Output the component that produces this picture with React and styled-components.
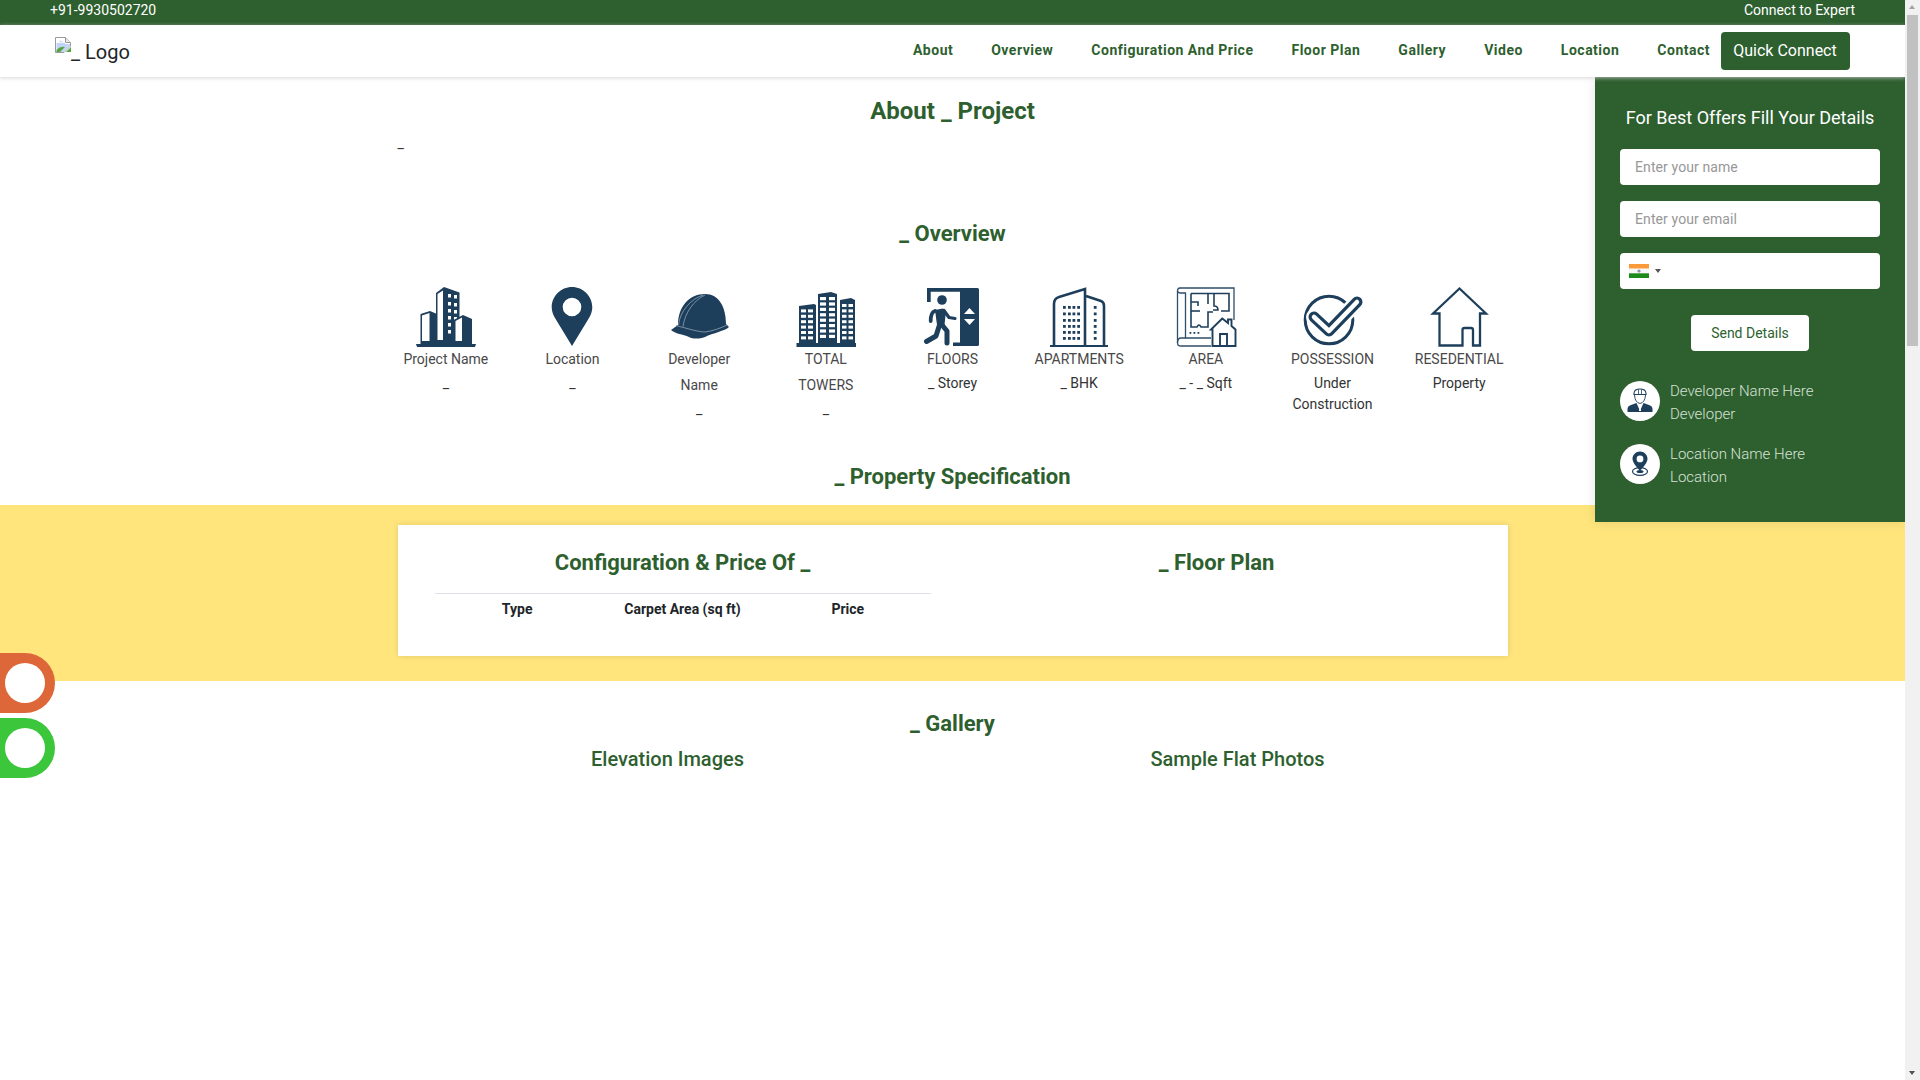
import React from 'react'
import styled, { createGlobalStyle } from 'styled-components'

const GREEN = '#2e5f2f'
const NAVY = '#1e3f5c'

const GlobalStyle = createGlobalStyle`
  html, body {
    margin: 0;
    padding: 0;
    height: 100%;
    overflow: hidden;
    background: #fff;
  }
  body {
    font-family: Roboto, "Liberation Sans", sans-serif;
    font-size: 14px;
    line-height: 21px;
    color: #333;
  }
  * { box-sizing: border-box; }
`

const Viewport = styled.div`
  display: flex;
  width: 1920px;
  height: 1080px;
  overflow: hidden;
`
const Page = styled.div`
  position: relative;
  width: 1905px;
  height: 1080px;
  overflow: hidden;
  flex: none;
`

/* top bars */
const TopBar = styled.div`
  display: flex;
  justify-content: space-between;
  height: 25px;
  padding: 0 50px;
  background: ${GREEN};
  color: #fff;
`
const NavBar = styled.nav`
  position: relative;
  z-index: 3;
  display: flex;
  align-items: center;
  justify-content: space-between;
  height: 52px;
  padding: 0 55.5px 0 55px;
  background: #fff;
  box-shadow: 0 1px 4px rgba(205, 205, 205, 0.8);
`
const Logo = styled.div`
  display: flex;
  align-items: flex-start;
  height: 28px;
  font-size: 20px;
  line-height: 28px;
  color: #212529;
  svg { display: block; }
  span { margin-top: 1px; }
`
const NavLinks = styled.div`
  display: flex;
  align-items: center;
  gap: 38px;
`
const NavLink = styled.a`
  padding-bottom: 2px;
  font-weight: 700;
  letter-spacing: 0.5px;
  color: ${GREEN};
`
const QuickButton = styled.button`
  width: 129px;
  height: 38px;
  margin-left: -27.5px;
  padding: 0;
  border: 0;
  border-radius: 4px;
  background: ${GREEN};
  color: #fff;
  font: 400 16px/24px Roboto, sans-serif;
`

/* content */
const Main = styled.main`
  display: flex;
  flex-direction: column;
`
const SectionTitle = styled.h2`
  margin: ${p => p.$top || 0}px 0 ${p => p.$bottom || 0}px;
  font-size: ${p => p.$size || 22}px;
  line-height: ${p => p.$line || 26}px;
  font-weight: 700;
  text-align: center;
  color: ${GREEN};
`
const Container = styled.div`
  width: 1110px;
  margin: 0 auto;
`
const AboutText = styled.p`
  margin: 7px 0 0;
  height: 21px;
`
const OverviewGrid = styled.div`
  display: grid;
  grid-template-columns: repeat(9, 1fr);
  width: 1140px;
  margin: 40px auto 0;
`
const OverviewItem = styled.div`
  padding: 0 15px;
  text-align: center;
  svg {
    display: block;
    width: 60px;
    height: 60px;
    margin: 0 0 -1px calc(50% - 30px);
    overflow: visible;
  }
`
const OverviewLabel = styled.div`
  line-height: 26px;
  color: #484848;
`
const OverviewValue = styled.div`
  margin-top: 1px;
  color: #333;
`
const YellowBand = styled.section`
  margin-top: 15px;
  padding: 20px 0 25px;
  background: #ffe57c;
`
const Card = styled.div`
  display: grid;
  grid-template-columns: 534px 534px;
  width: 1110px;
  height: 131px;
  margin: 0 auto;
  padding: 25px 24px 0 18px;
  background: #fff;
  box-shadow: 0 0 6px rgba(0, 0, 0, 0.12);
`
const PriceTable = styled.table`
  width: 496px;
  margin: 17px 19px 0;
  border-collapse: collapse;
  table-layout: fixed;
  th {
    padding: 2px 0;
    border-top: 1px solid #dee2e6;
    font-weight: 700;
    color: #212529;
    line-height: 27px;
  }
`
const GalleryRow = styled.div`
  display: grid;
  grid-template-columns: 1fr 1fr;
  width: 1140px;
  margin: 10px auto 0;
`
const GalleryTitle = styled.h3`
  margin: 0;
  font-size: 20px;
  line-height: 24px;
  font-weight: 500;
  text-align: center;
  color: ${GREEN};
`

/* side form */
const SidePanel = styled.aside`
  position: absolute;
  z-index: 2;
  top: 77px;
  right: 0;
  width: 310px;
  height: 445px;
  padding: 29px 25px 0;
  background: ${GREEN};
  box-shadow: 0 0 12px rgba(0, 0, 0, 0.1);
`
const PanelTitle = styled.div`
  margin: 0 -10px 19px;
  font-size: 18px;
  line-height: 24px;
  text-align: center;
  color: #fff;
`
const Field = styled.input`
  display: block;
  width: 260px;
  height: 36px;
  margin-bottom: 16px;
  padding: 0 15px;
  border: 0;
  border-radius: 4px;
  background: #fff;
  font: 400 14px Roboto, sans-serif;
  letter-spacing: 0.1px;
  &::placeholder { color: #979797; opacity: 1; }
`
const PhoneField = styled.div`
  display: flex;
  align-items: center;
  gap: 6px;
  width: 260px;
  height: 36px;
  padding: 0 9px;
  border-radius: 4px;
  background: #fff;
`
const Caret = styled.span`
  width: 0;
  height: 0;
  border-left: 3px solid transparent;
  border-right: 3px solid transparent;
  border-top: 4px solid #555;
`
const SendButton = styled.button`
  display: block;
  width: 118px;
  height: 36px;
  margin: 26px auto 30px;
  border: 0;
  border-radius: 4px;
  background: #fff;
  color: ${GREEN};
  font: 400 14px Roboto, sans-serif;
`
const InfoRow = styled.div`
  display: flex;
  align-items: flex-start;
  gap: 10px;
  margin-bottom: 18px;
`
const InfoCircle = styled.div`
  flex: none;
  width: 40px;
  height: 40px;
  border-radius: 50%;
  background: #fff;
  svg { display: block; }
`
const InfoText = styled.div`
  margin-top: -1px;
  font-size: 15px;
  line-height: 23px;
  font-weight: 300;
  color: #d7e2d7;
`

/* floating contact buttons */
const FloatStack = styled.div`
  position: absolute;
  z-index: 4;
  left: 0;
  top: 653px;
  display: flex;
  flex-direction: column;
  gap: 5px;
`
const FloatButton = styled.a`
  display: flex;
  align-items: center;
  width: 55px;
  height: 60px;
  padding-left: 5px;
  border-radius: 0 30px 30px 0;
  background: ${p => p.$color};
  &::before {
    content: '';
    width: 40px;
    height: 40px;
    border-radius: 50%;
    background: #fff;
  }
`

/* the browser scrollbar of the reference */
const ScrollTrack = styled.div`
  position: relative;
  flex: none;
  width: 15px;
  height: 1080px;
  background: #f1f1f1;
`
const ScrollThumb = styled.div`
  position: absolute;
  top: 15px;
  left: 2px;
  width: 11px;
  height: 331px;
  background: #c1c1c1;
`
const ScrollArrow = styled.span`
  position: absolute;
  left: 4px;
  ${p => (p.$down ? 'bottom: 5px;' : 'top: 5px;')}
  border-left: 3.5px solid transparent;
  border-right: 3.5px solid transparent;
  ${p => (p.$down ? 'border-top: 4px solid #505050;' : 'border-bottom: 4px solid #a3a3a3;')}
`

const BrokenImage = () => (
  <svg width='16' height='16' viewBox='0 0 16 16'>
    <path d='M0.5 0.5H10.5L15.5 5.5V9L9 15.5H0.5Z' fill='#fff' stroke='#9a9a9a' />
    <path d='M10.5 0.5V5.5H15.5' fill='#e8e8e8' stroke='#9a9a9a' />
    <path d='M1.5 6H10V7H15V9L8.5 15H1.5Z' fill='#c3d4f5' />
    <path d='M4 4.5Q5 2.5 7 3.5Q8.5 4 8.5 5.5H3.5Z' fill='#dfe7f7' />
    <path d='M1.5 15V13Q5 9 10 10L5 15Z' fill='#53a642' />
    <path d='M11 15L16 10V15Z' fill='#53a642' />
  </svg>
)

const BuildingsIcon = () => (
  <svg viewBox='0 0 60 60'>
    <path d='M0 57H60L59 60H1Z' fill={NAVY} />
    <path d='M20 6L28 0L43.5 5.5V57H20Z' fill={NAVY} />
    <path d='M21.5 7L27 3.5V53H21.5Z' fill='#fff' />
    {[7, 15, 22, 29, 36, 43].map(y => (
      <g key={y}>
        <rect x='32' y={y} width='3' height='3.5' fill='#fff' />
        <rect x='38' y={y + 1} width='3' height='3.5' fill='#fff' />
      </g>
    ))}
    <path d='M4.5 27L14 24L21 27V57H4.5Z' fill={NAVY} />
    <path d='M6 28.5L13.5 26V54H6Z' fill='#fff' />
    <path d='M37.5 33L47 28L56 32V57H37.5Z' fill={NAVY} />
    <path d='M39.5 34L46 30.5V54H39.5Z' fill='#fff' />
  </svg>
)

const PinIcon = () => (
  <svg viewBox='0 0 60 60'>
    <path
      fillRule='evenodd'
      fill={NAVY}
      d='M30 0C18.8 0 9.7 9.1 9.7 20.3C9.7 24 11 28 13 31L30 59L47 31C49 28 50.3 24 50.3 20.3C50.3 9.1 41.2 0 30 0ZM30 10.7A9.3 9.3 0 1 1 30 29.3A9.3 9.3 0 1 1 30 10.7Z'
    />
  </svg>
)

const HelmetIcon = () => (
  <svg viewBox='0 0 60 60'>
    <path
      fill={NAVY}
      d='M9 38C9 20 20 7 36 7C50 7 57 20 57 37L60 40C56 44 44 46 36 50C30 52 24 52 20 50C14 47 6 47 2 43Z'
    />
    <g fill='none' stroke='#8fa5b6' strokeWidth='0.8'>
      <path d='M7 38.5C20 42 30 45 36 45C44 44 52 41 58 38' />
      <path d='M9.5 38C11 24 22 12 34 8' />
      <path d='M14 39.5C16 26 24 14 36 8' />
    </g>
  </svg>
)

const TowersIcon = () => {
  const rows = [0, 1, 2, 3, 4, 5, 6]
  return (
    <svg viewBox='0 0 60 60'>
      <path d='M0.5 56H60V60H0.5Z' fill={NAVY} />
      <path d='M3 19L18 17L20 18V57H3Z' fill={NAVY} />
      <path d='M22 7L35 5L41 7V57H22Z' fill={NAVY} />
      <path d='M44 13L55 11L59 13V57H44Z' fill={NAVY} />
      {rows.slice(1).map(r => (
        <g key={r} fill='#fff'>
          <rect x='5' y={17 + r * 5.4} width='5' height='3' />
          <rect x='12' y={17 + r * 5.4} width='5' height='3' />
        </g>
      ))}
      {rows.concat([7]).map(r => (
        <g key={r} fill='#fff'>
          <rect x='24' y={10 + r * 5.4} width='6' height='3.2' />
          <rect x='33' y={10 + r * 5.4} width='6' height='3.2' />
        </g>
      ))}
      {rows.map(r => (
        <g key={r} fill='#fff'>
          <rect x='46' y={17 + r * 5.4} width='4.5' height='3' />
          <rect x='52.5' y={17 + r * 5.4} width='4.5' height='3' />
        </g>
      ))}
    </svg>
  )
}

const ExitIcon = () => (
  <svg viewBox='0 0 60 60'>
    <path d='M5 15V1H38.3V4.7H8.7V15Z' fill={NAVY} />
    <path d='M38 1H55.5Q57 1 57 2.5V57.5Q57 59 55.5 59H31V55.5H38Z' fill={NAVY} />
    <path d='M47.5 21L53 27H42Z M42 32H53L47.5 38Z' fill='#fff' />
    <circle cx='20' cy='13' r='4.8' fill={NAVY} />
    <path d='M13 23L21 21.5L24 24L22.5 38H15Z' fill={NAVY} />
    <g fill='none' stroke={NAVY} strokeLinecap='round' strokeLinejoin='round'>
      <path d='M13 24C9.5 25 8.7 28 8.7 34' strokeWidth='3.8' />
      <path d='M22 23.5L27 30.5L33 31.5' strokeWidth='3.2' />
      <path d='M17.5 38L14 49L4.5 54.5' strokeWidth='5' />
      <path d='M20 38L25 44V56' strokeWidth='5' />
    </g>
  </svg>
)

const ApartmentsIcon = () => {
  const rows = [19, 25.5, 32, 38, 44, 50]
  return (
    <svg viewBox='0 0 60 60'>
      <path d='M1 58H59V60H1Z' fill={NAVY} />
      <g fill='none' stroke={NAVY} strokeWidth='2.6'>
        <path d='M5 59V17Q5 11.5 10 10L36 2V59' />
        <path d='M37 9L52 14Q55 15 55 19V59' />
      </g>
      {rows.map(y => (
        <g key={y} fill={NAVY}>
          {[14, 19, 23.5, 28.2, 44.8].map(x => (
            <rect key={x} x={x} y={y} width='2.8' height='2.8' />
          ))}
        </g>
      ))}
    </svg>
  )
}

const PlanIcon = () => (
  <svg viewBox='0 0 60 60'>
    <g fill='none' stroke={NAVY} strokeWidth='1.3' opacity='0.92'>
      <path d='M58 33V1H4C2 1 1.5 2.5 1.5 4V56C1.5 58 3 59 5 59H35' />
      <path d='M1.5 4C1.5 5.5 3 6 5 6H9.5V51H35' />
      <path d='M1.5 56C1.5 53 3 51 5 51H9.5' />
    </g>
    <g fill='none' stroke={NAVY} strokeWidth='1.6'>
      <path d='M15 6.5H53V24H45' />
      <path d='M15 6.5V40H21Q23 36 25 40H32V25H37' />
      <path d='M15 15H22V19' />
      <path d='M15 24H24' />
      <path d='M32 6.5V17' />
      <path d='M38 6.5V19Q42 19 42 23H37' />
    </g>
    <g fill={NAVY}>
      <rect x='13.5' y='45' width='1.8' height='1.8' />
      <rect x='17.5' y='45' width='1.8' height='1.8' />
      <rect x='21.5' y='45' width='1.8' height='1.8' />
    </g>
    <path
      d='M46.3 31.5L35 42.5H36.5V59H59.5V42.5L55.5 39V32.5H52V36Z'
      fill='#fff'
      stroke={NAVY}
      strokeWidth='1.9'
    />
    <path d='M44 59V47H51V59' fill='none' stroke={NAVY} strokeWidth='1.9' />
  </svg>
)

const CheckIcon = () => (
  <svg viewBox='0 0 60 60'>
    <circle cx='27' cy='33' r='23.8' fill='none' stroke={NAVY} strokeWidth='3' />
    <g fill='none' strokeLinecap='round' strokeLinejoin='round'>
      <path d='M12 30L27 44L55 15' stroke='#fff' strokeWidth='16' />
      <path d='M12 30L27 44L55 15' stroke={NAVY} strokeWidth='11' />
      <path d='M12 30L27 44L55 15' stroke='#fff' strokeWidth='4.5' />
    </g>
  </svg>
)

const HouseIcon = () => (
  <svg viewBox='0 0 60 60'>
    <path
      d='M30.5 1.5L4 26.5H10.5V58.5H33.5V43Q33.5 41 35.5 41H42Q44 41 44 43V58.5H51V26.5H57Z'
      fill='none'
      stroke={NAVY}
      strokeWidth='2.3'
    />
  </svg>
)

const EngineerIcon = () => (
  <svg viewBox='0 0 40 40' width='40' height='40'>
    <path d='M7.5 31V28Q7.5 25 11 24L16.5 22L20 30L23.5 22L29 24Q32.5 25 32.5 28V31Z' fill={NAVY} />
    <path d='M19.3 25H20.7L21 30H19Z' fill='#fff' />
    <path d='M14.5 14Q15 21.5 20 22.5Q25 21.5 25.5 14' fill='#fff' stroke={NAVY} strokeWidth='0.9' />
    <path d='M14 13.5H26V12Q25.5 8 20 8Q14.5 8 14 12Z' fill='#fff' stroke={NAVY} strokeWidth='1.1' />
    <path d='M18.5 8.5V13M21.5 8.5V13' stroke={NAVY} strokeWidth='0.8' />
  </svg>
)

const MapPinIcon = () => (
  <svg viewBox='0 0 40 40' width='40' height='40'>
    <ellipse cx='20' cy='27.5' rx='7.5' ry='3.8' fill='none' stroke={NAVY} strokeWidth='1.2' />
    <ellipse cx='20' cy='27.5' rx='3.5' ry='1.6' fill={NAVY} />
    <path
      fillRule='evenodd'
      fill={NAVY}
      d='M20 7.5C15.8 7.5 12.5 10.8 12.5 14.8C12.5 19 17 23 20 27C23 23 27.5 19 27.5 14.8C27.5 10.8 24.2 7.5 20 7.5ZM20 11.5A3.4 3.4 0 1 1 20 18.3A3.4 3.4 0 1 1 20 11.5Z'
    />
  </svg>
)

const IndiaFlag = () => (
  <svg width='20' height='14' viewBox='0 0 20 14'>
    <rect width='20' height='4.7' fill='#fb9a3a' />
    <rect y='4.7' width='20' height='4.6' fill='#f7f7f7' />
    <rect y='9.3' width='20' height='4.7' fill='#1d8a1b' />
    <circle cx='10' cy='7' r='1.6' fill='#8a8fb5' />
  </svg>
)

const navItems = ['About', 'Overview', 'Configuration And Price', 'Floor Plan', 'Gallery', 'Video', 'Location', 'Contact']

const overview = [
  { icon: <BuildingsIcon />, label: 'Project Name', value: '_' },
  { icon: <PinIcon />, label: 'Location', value: '_' },
  { icon: <HelmetIcon />, label: 'Developer Name', value: '_' },
  { icon: <TowersIcon />, label: 'TOTAL TOWERS', value: '_' },
  { icon: <ExitIcon />, label: 'FLOORS', value: '_ Storey' },
  { icon: <ApartmentsIcon />, label: 'APARTMENTS', value: '_ BHK' },
  { icon: <PlanIcon />, label: 'AREA', value: '_ - _ Sqft' },
  { icon: <CheckIcon />, label: 'POSSESSION', value: 'Under Construction' },
  { icon: <HouseIcon />, label: 'RESEDENTIAL', value: 'Property' }
]

export default function App () {
  return (
    <Viewport>
      <GlobalStyle />
      <Page>
        <TopBar>
          <span>+91-9930502720</span>
          <span>Connect to Expert</span>
        </TopBar>
        <NavBar>
          <Logo>
            <BrokenImage />
            <span>_ Logo</span>
          </Logo>
          <NavLinks>
            {navItems.map(item => <NavLink key={item}>{item}</NavLink>)}
            <QuickButton>Quick Connect</QuickButton>
          </NavLinks>
        </NavBar>

        <Main>
          <SectionTitle $top={20} $size={24} $line={29}>About _ Project</SectionTitle>
          <Container>
            <AboutText>_</AboutText>
          </Container>

          <SectionTitle $top={67}>_ Overview</SectionTitle>
          <OverviewGrid>
            {overview.map(item => (
              <OverviewItem key={item.label}>
                {item.icon}
                <OverviewLabel>{item.label}</OverviewLabel>
                <OverviewValue>{item.value}</OverviewValue>
              </OverviewItem>
            ))}
          </OverviewGrid>

          <SectionTitle $top={44}>_ Property Specification</SectionTitle>
          <YellowBand>
            <Card>
              <div>
                <SectionTitle>Configuration &amp; Price Of _</SectionTitle>
                <PriceTable>
                  <thead>
                    <tr>
                      <th>Type</th>
                      <th>Carpet Area (sq ft)</th>
                      <th>Price</th>
                    </tr>
                  </thead>
                </PriceTable>
              </div>
              <SectionTitle>_ Floor Plan</SectionTitle>
            </Card>
          </YellowBand>

          <SectionTitle $top={30}>_ Gallery</SectionTitle>
          <GalleryRow>
            <GalleryTitle>Elevation Images</GalleryTitle>
            <GalleryTitle>Sample Flat Photos</GalleryTitle>
          </GalleryRow>
        </Main>

        <SidePanel>
          <PanelTitle>For Best Offers Fill Your Details</PanelTitle>
          <Field placeholder='Enter your name' />
          <Field placeholder='Enter your email' />
          <PhoneField>
            <IndiaFlag />
            <Caret />
          </PhoneField>
          <SendButton>Send Details</SendButton>
          <InfoRow>
            <InfoCircle><EngineerIcon /></InfoCircle>
            <InfoText>Developer Name Here<br />Developer</InfoText>
          </InfoRow>
          <InfoRow>
            <InfoCircle><MapPinIcon /></InfoCircle>
            <InfoText>Location Name Here<br />Location</InfoText>
          </InfoRow>
        </SidePanel>

        <FloatStack>
          <FloatButton $color='#dd6739' />
          <FloatButton $color='#3cc63c' />
        </FloatStack>
      </Page>
      <ScrollTrack>
        <ScrollArrow />
        <ScrollThumb />
        <ScrollArrow $down />
      </ScrollTrack>
    </Viewport>
  )
}
